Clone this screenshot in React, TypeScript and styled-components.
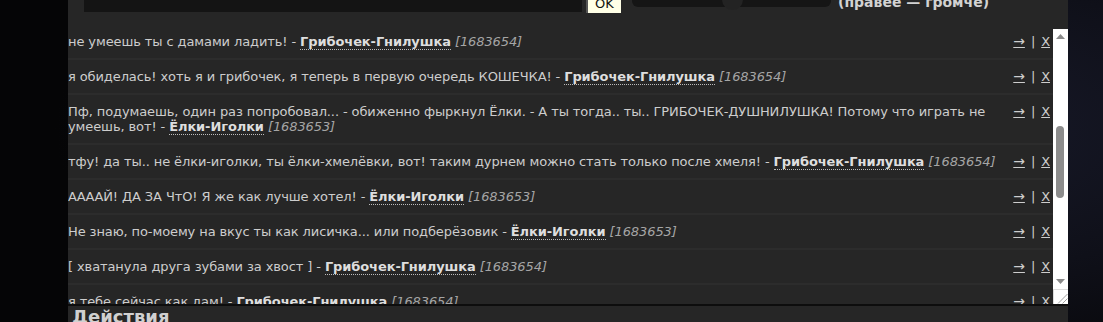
import React, { useLayoutEffect, useRef, useState } from "react";
import styled, { createGlobalStyle } from "styled-components";

const Global = createGlobalStyle`
  html, body { margin: 0; padding: 0; height: 100%; overflow: hidden; }
  body {
    background: radial-gradient(ellipse 70% 90% at 75% 40%, #1a1c2e 0%, #0f1019 55%, #050506 100%);
    font-family: "DejaVu Sans", Verdana, sans-serif;
  }
`;

const Page = styled.div`
  display: flex;
  padding-left: 68px;
  height: 322px;
`;

const Panel = styled.section`
  width: 1000px;
  background: #262626;
  display: flex;
  flex-direction: column;
`;

const Controls = styled.div`
  flex: none;
  display: flex;
  align-items: flex-end;
  height: 26px;
  margin-top: -14px;
  padding-left: 16px;
`;

const TextInput = styled.input`
  width: 498px;
  height: 26px;
  box-sizing: border-box;
  border: none;
  background: #141414;
  color: #ddd;
  outline: none;
`;

const OkButton = styled.button`
  margin-left: 4px;
  margin-bottom: -1px;
  width: 35px;
  height: 27px;
  box-sizing: border-box;
  border: none;
  border-left: 2px solid #555;
  background: #ffffe6;
  color: #111;
  font-family: "DejaVu Sans", sans-serif;
  font-size: 13px;
  padding: 8px 0 0;
  line-height: 16px;
`;

const Slider = styled.div`
  position: relative;
  margin-left: 11px;
  margin-bottom: 5px;
  width: 199px;
  height: 21px;
  border-radius: 6px;
  background: #151515;
`;

const SliderKnob = styled.span`
  position: absolute;
  left: 90px;
  top: 3px;
  width: 21px;
  height: 21px;
  border-radius: 50%;
  background: #232323;
`;

const VolumeLabel = styled.span`
  margin-left: 7px;
  margin-bottom: 2px;
  font-weight: bold;
  font-size: 14px;
  color: #d2d2d2;
  line-height: 16px;
  white-space: nowrap;
`;

const LogBox = styled.div`
  flex: none;
  display: flex;
  margin-top: 17px;
  height: 275px;
  border-bottom: 2px solid #0d0d0d;
`;

const Viewport = styled.div`
  flex: 1;
  min-width: 0;
  overflow: hidden;
`;

const Rail = styled.div`
  flex: none;
  width: 15px;
  display: flex;
  flex-direction: column;
  background: #fff;
`;

const RailButton = styled.div`
  flex: none;
  height: 15px;
  display: flex;
  align-items: center;
  justify-content: center;
`;

const Track = styled.div`
  flex: 1;
  position: relative;
`;

const RailThumb = styled.div`
  position: absolute;
  left: 3px;
  width: 8px;
  border-radius: 4px;
  background: #8c8c8c;
`;

const Grip = styled.div`
  flex: none;
  height: 15px;
  box-sizing: border-box;
  border-top: 1px solid #dcdcdc;
  border-left: 1px solid #dcdcdc;
  display: flex;
  align-items: flex-end;
  justify-content: flex-end;
`;

const Row = styled.div`
  display: flex;
  align-items: flex-start;
  padding: 9px 3px 9px 0;
  border-bottom: 2px solid #2c2c2c;
  font-size: 13px;
  letter-spacing: -0.1px;
  line-height: 15px;
  color: #cdcdcd;
`;

const Message = styled.div`
  flex: 1;
  min-width: 0;
`;

const Author = styled.b`
  color: #dedede;
  border-bottom: 1px dotted #bbb;
`;

const MsgId = styled.i`
  color: #a5a5a5;
`;

const Actions = styled.div`
  flex: none;
  display: flex;
  gap: 6px;
  margin-left: 10px;
  white-space: nowrap;
  color: #cdcdcd;
`;

const ActionLink = styled.a<{ $wide?: boolean }>`
  color: #cdcdcd;
  text-decoration: underline;
  cursor: pointer;
  font-size: ${(p) => (p.$wide ? "14px" : "13px")};
`;

const Heading = styled.h2`
  flex: none;
  margin: 0;
  padding: 0 0 0 4px;
  font-size: 18px;
  font-weight: bold;
  color: #d0d0d0;
  line-height: 22px;
`;

type Msg = { text: string; author: string; id: string };

const ELKI = "Ёлки-Иголки";
const GRIB = "Грибочек-Гнилушка";

const messages: Msg[] = [
  { text: "не умеешь ты с дамами ладить! - ", author: GRIB, id: "1683654" },
  { text: "я обиделась! хоть я и грибочек, я теперь в первую очередь КОШЕЧКА! - ", author: GRIB, id: "1683654" },
  { text: "Пф, подумаешь, один раз попробовал... - обиженно фыркнул Ёлки. - А ты тогда.. ты.. ГРИБОЧЕК-ДУШНИЛУШКА! Потому что играть не умеешь, вот! - ", author: ELKI, id: "1683653" },
  { text: "тфу! да ты.. не ёлки-иголки, ты ёлки-хмелёвки, вот! таким дурнем можно стать только после хмеля! - ", author: GRIB, id: "1683654" },
  { text: "ААААЙ! ДА ЗА ЧтО! Я же как лучше хотел! - ", author: ELKI, id: "1683653" },
  { text: "Не знаю, по-моему на вкус ты как лисичка... или подберёзовик - ", author: ELKI, id: "1683653" },
  { text: "[ хватанула друга зубами за хвост ] - ", author: GRIB, id: "1683654" },
  { text: "я тебе сейчас как дам! - ", author: GRIB, id: "1683654" },
];

const shortOnes = [0, 1, 4, 5, 6, 7];
const BEFORE = 9;
const AFTER = 8;

const allRows: Msg[] = [
  ...Array.from({ length: BEFORE }, (_, i) => messages[shortOnes[i % shortOnes.length]]),
  ...messages,
  ...Array.from({ length: AFTER }, (_, i) => messages[shortOnes[(i + 2) % shortOnes.length]]),
];

const UpArrow = () => (
  <svg width="9" height="5" viewBox="0 0 9 5">
    <polygon points="0,5 4.5,0 9,5" fill="#8a8a8a" />
  </svg>
);

const DownArrow = () => (
  <svg width="9" height="5" viewBox="0 0 9 5">
    <polygon points="0,0 9,0 4.5,5" fill="#8a8a8a" />
  </svg>
);

const GripLines = () => (
  <svg width="12" height="12" viewBox="0 0 12 12">
    <line x1="2" y1="11.5" x2="11.5" y2="2" stroke="#a0a0a0" strokeWidth="1" />
    <line x1="6.5" y1="11.5" x2="11.5" y2="6.5" stroke="#a0a0a0" strokeWidth="1" />
  </svg>
);

export default function App() {
  const viewRef = useRef<HTMLDivElement>(null);
  const firstRef = useRef<HTMLDivElement>(null);
  const trackRef = useRef<HTMLDivElement>(null);
  const [thumb, setThumb] = useState({ top: 84, height: 72 });

  useLayoutEffect(() => {
    const v = viewRef.current;
    const f = firstRef.current;
    const t = trackRef.current;
    if (v && f && t) {
      v.scrollTop = f.offsetTop - v.offsetTop + 4;
      const trackH = t.clientHeight;
      const ratio = v.clientHeight / v.scrollHeight;
      setThumb({
        top: (v.scrollTop / v.scrollHeight) * trackH,
        height: ratio * trackH,
      });
    }
  }, []);

  return (
    <>
      <Global />
      <Page>
        <Panel>
          <Controls>
            <TextInput type="text" />
            <OkButton>OK</OkButton>
            <Slider>
              <SliderKnob />
            </Slider>
            <VolumeLabel>(правее — громче)</VolumeLabel>
          </Controls>
          <LogBox>
            <Viewport ref={viewRef}>
              {allRows.map((m, i) => (
                <Row key={i} ref={i === BEFORE ? firstRef : undefined}>
                  <Message>
                    {m.text}
                    <Author>{m.author}</Author> <MsgId>[{m.id}]</MsgId>
                  </Message>
                  <Actions>
                    <ActionLink $wide>→</ActionLink>
                    <span>|</span>
                    <ActionLink>X</ActionLink>
                  </Actions>
                </Row>
              ))}
            </Viewport>
            <Rail>
              <RailButton>
                <UpArrow />
              </RailButton>
              <Track ref={trackRef}>
                <RailThumb style={{ top: thumb.top, height: thumb.height }} />
              </Track>
              <RailButton>
                <DownArrow />
              </RailButton>
              <Grip>
                <GripLines />
              </Grip>
            </Rail>
          </LogBox>
          <Heading>Действия</Heading>
        </Panel>
      </Page>
    </>
  );
}
